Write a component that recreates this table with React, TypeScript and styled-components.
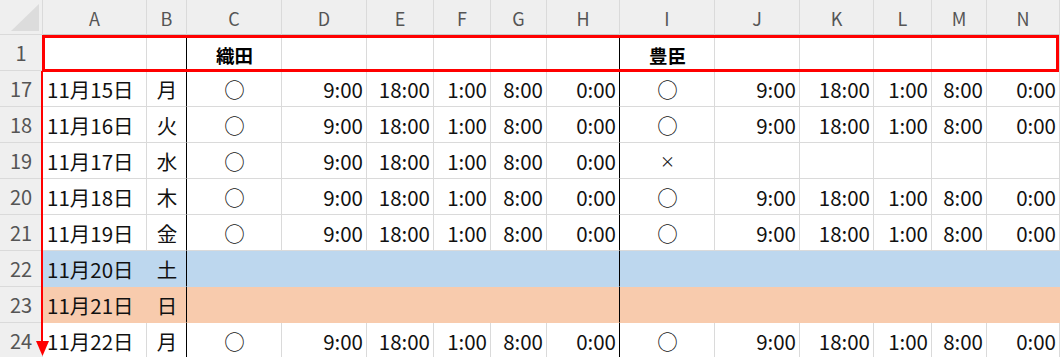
import React, { FC } from "react";
import styled, { createGlobalStyle, css } from "styled-components";

const GlobalStyle = createGlobalStyle`
  html, body {
    margin: 0;
    padding: 0;
    background: #ffffff;
    overflow: hidden;
  }
`;

const widths = [43, 104, 40, 95, 85, 67, 57, 56, 73, 95, 85, 74, 58, 55, 73];
const letters = ["A", "B", "C", "D", "E", "F", "G", "H", "I", "J", "K", "L", "M", "N"];
const aligns: Array<"left" | "center" | "right"> = [
  "left", "center", "center", "right", "right", "right", "right", "right",
  "center", "right", "right", "right", "right", "right",
];
// black separators sit on the right edge of B and H
const edges = [1, 7];

const gridLine = "#dadada";
const headBg = "#efefef";

type Fill = "blue" | "orange" | undefined;
const fills = { blue: "#bdd7ee", orange: "#f8cbad" };

const Sheet = styled.div`
  position: relative;
  width: 1060px;
  height: 357px;
  overflow: hidden;
  font-family: "Noto Sans CJK JP", "Noto Sans", sans-serif;
  color: #111;
`;

const Row = styled.div<{ $h: number }>`
  display: grid;
  grid-template-columns: ${widths.map((w) => `${w}px`).join(" ")};
  height: ${(p) => p.$h}px;
`;

const Corner = styled.div`
  background: ${headBg};
  border-right: 1px solid ${gridLine};
  border-bottom: 1px solid ${gridLine};
  box-sizing: border-box;
  display: flex;
  align-items: flex-end;
  justify-content: flex-end;
  padding: 0 3px 3px 0;
`;

const ColHead = styled.div`
  background: ${headBg};
  border-right: 1px solid ${gridLine};
  border-bottom: 1px solid #c8c8c8;
  box-sizing: border-box;
  display: flex;
  align-items: center;
  justify-content: center;
  font-size: 18px;
  color: #555;
  padding-top: 1px;
`;

const RowHead = styled.div`
  background: ${headBg};
  border-right: 1px solid ${gridLine};
  border-bottom: 1px solid ${gridLine};
  box-sizing: border-box;
  display: flex;
  align-items: center;
  justify-content: center;
  font-size: 20px;
  color: #555;
`;

const Cell = styled.div<{ $align: string; $fill: Fill; $edge: boolean; $bottom?: boolean }>`
  box-sizing: border-box;
  display: flex;
  align-items: ${(p) => (p.$bottom ? "flex-end" : "center")};
  justify-content: ${(p) =>
    p.$align === "left" ? "flex-start" : p.$align === "right" ? "flex-end" : "center"};
  padding: ${(p) => (p.$bottom ? "0 3px 2px 4px" : "0 3px 0 4px")};
  font-size: 20.5px;
  white-space: nowrap;
  border-bottom: 1px solid ${gridLine};
  border-right: 1px solid ${gridLine};
  ${(p) =>
    p.$fill &&
    css`
      background: ${fills[p.$fill]};
      border-bottom-color: ${fills[p.$fill]};
      border-right-color: ${fills[p.$fill]};
    `}
  ${(p) =>
    p.$edge &&
    css`
      border-right-color: #000;
    `}
`;

const Title = styled.span`
  font-size: 18.5px;
  font-weight: 700;
  color: #000;
`;

const Mark = styled.span`
  font-size: 15px;
`;

const Outline = styled.div`
  position: absolute;
  left: 42px;
  top: 35px;
  width: 1017px;
  height: 37px;
  border: 3px solid #ff0000;
  box-sizing: border-box;
  pointer-events: none;
`;

const Arrow = styled.svg`
  position: absolute;
  left: 36px;
  top: 71px;
`;

const times = ["9:00", "18:00", "1:00", "8:00", "0:00"];
const full = ["○", ...times, "○", ...times];

interface Line {
  n: number;
  date: string;
  day: string;
  values: string[];
  fill?: Fill;
}

const lines: Line[] = [
  { n: 17, date: "11月15日", day: "月", values: full },
  { n: 18, date: "11月16日", day: "火", values: full },
  { n: 19, date: "11月17日", day: "水", values: ["○", ...times, "×"] },
  { n: 20, date: "11月18日", day: "木", values: full },
  { n: 21, date: "11月19日", day: "金", values: full },
  { n: 22, date: "11月20日", day: "土", values: [], fill: "blue" },
  { n: 23, date: "11月21日", day: "日", values: [], fill: "orange" },
  { n: 24, date: "11月22日", day: "月", values: full },
];

const CornerMark: FC = () => (
  <svg width="28" height="27">
    <polygon points="0,27 28,27 28,0" fill="#dcdcdc" />
  </svg>
);

const App: FC = () => {
  const titleRow = letters.map((_, i) => {
    let content: React.ReactNode = null;
    if (i === 2) content = <Title>織田</Title>;
    if (i === 8) content = <Title>豊臣</Title>;
    return (
      <Cell key={i} $align="center" $fill={undefined} $edge={edges.includes(i)} $bottom>
        {content}
      </Cell>
    );
  });

  return (
    <>
      <GlobalStyle />
      <Sheet>
        <Row $h={35}>
          <Corner>
            <CornerMark />
          </Corner>
          {letters.map((l) => (
            <ColHead key={l}>{l}</ColHead>
          ))}
        </Row>
        <Row $h={36}>
          <RowHead>1</RowHead>
          {titleRow}
        </Row>
        {lines.map((line) => {
          const cells = [line.date, line.day, ...line.values];
          return (
            <Row $h={36} key={line.n}>
              <RowHead>{line.n}</RowHead>
              {letters.map((_, i) => {
                const v = cells[i] || "";
                return (
                  <Cell key={i} $align={aligns[i]} $fill={line.fill} $edge={edges.includes(i)}>
                    {v === "×" ? <Mark>{v}</Mark> : v}
                  </Cell>
                );
              })}
            </Row>
          );
        })}
        <Outline />
        <Arrow width="14" height="286">
          <line x1="6" y1="0" x2="6" y2="274" stroke="#ff0000" strokeWidth="2" />
          <polygon points="0,270 13,270 6.5,285" fill="#ff0000" />
        </Arrow>
      </Sheet>
    </>
  );
};

export default App;
